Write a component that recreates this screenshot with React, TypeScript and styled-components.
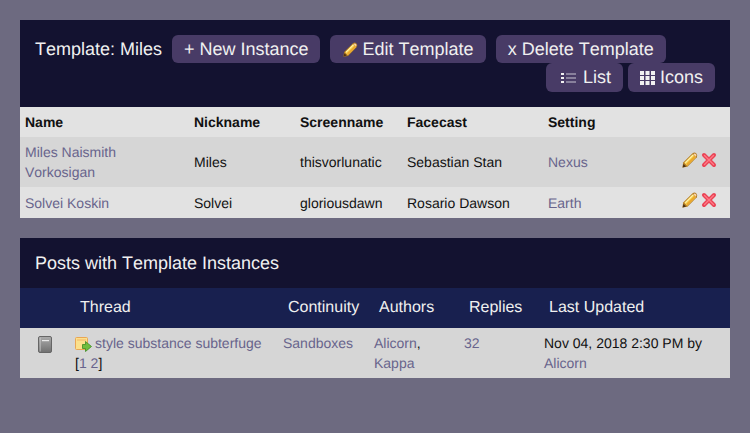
import React from "react";
import styled, { createGlobalStyle } from "styled-components";

const GlobalStyle = createGlobalStyle`
    html, body {
        margin: 0;
        padding: 0;
        background: #6d6a80;
        font-family: "Liberation Sans", Arial, sans-serif;
        font-kerning: none;
        text-rendering: geometricPrecision;
    }
`;

const Page = styled.div`
    display: flex;
    flex-direction: column;
    gap: 20px;
    padding: 20px;
    height: 433px;
    box-sizing: border-box;
    overflow: hidden;
`;

const Panel = styled.section`
    display: flex;
    flex-direction: column;
`;

const TemplateHeader = styled.header`
    display: flex;
    flex-direction: column;
    height: 87px;
    box-sizing: border-box;
    padding: 15px 15px 0;
    background: #131230;
`;

const HeaderRow = styled.div<{ $end?: boolean; $gap: number }>`
    display: flex;
    align-items: center;
    gap: ${(p) => p.$gap}px;
    justify-content: ${(p) => (p.$end ? "flex-end" : "flex-start")};
`;

const TemplateTitle = styled.h1`
    margin: 0 0 1px 0;
    width: 127px;
    font-size: 18px;
    font-weight: normal;
    line-height: 26px;
    white-space: nowrap;
    color: #f0f0f0;
`;

const HeaderButton = styled.a<{ $h: number; $gap?: number; $left?: number; $right?: number }>`
    display: flex;
    align-items: center;
    gap: ${(p) => p.$gap ?? 5}px;
    height: ${(p) => p.$h}px;
    box-sizing: border-box;
    padding: 0 ${(p) => p.$right ?? 12}px 0 ${(p) => p.$left ?? 12}px;
    border-radius: 6px;
    background: #483b66;
    color: #f0f0f0;
    font-size: 18px;
    white-space: nowrap;
`;

const PanelTitle = styled.h2`
    display: flex;
    align-items: center;
    height: 50px;
    margin: 0;
    padding: 0 15px;
    background: #131230;
    color: #f0f0f0;
    font-size: 18px;
    font-weight: normal;
`;

const Table = styled.table`
    width: 710px;
    table-layout: fixed;
    border-collapse: collapse;
    font-size: 14px;
    line-height: 20px;
    color: #111;
`;

const TemplateHead = styled.th`
    height: 30px;
    padding: 0 5px;
    background: #e2e2e2;
    font-weight: bold;
    text-align: left;
`;

const Row = styled.tr<{ $alt?: boolean }>`
    background: ${(p) => (p.$alt ? "#e2e2e2" : "#d6d6d6")};
`;

const Cell = styled.td`
    padding: 5px;
    vertical-align: middle;
`;

const ActionCell = styled(Cell)`
    padding: 5px 13px 5px 0;
`;

const ActionIcons = styled.div`
    display: flex;
    justify-content: flex-end;
    align-items: flex-start;
    gap: 3px;
    height: 21px;
`;

const PostHead = styled.th`
    height: 40px;
    padding: 0 10px;
    background: #18204f;
    color: #f0f0f0;
    font-size: 16px;
    font-weight: normal;
    text-align: left;
    white-space: nowrap;
`;

const IconCell = styled(Cell)`
    padding: 8px 0 0;
    vertical-align: top;
`;

const TopCell = styled(Cell)`
    vertical-align: top;
`;

const Link = styled.a`
    color: #68648c;
    text-decoration: none;
`;

const ThreadSvg = styled.svg`
    display: inline-block;
    vertical-align: -4px;
    margin-right: 3px;
`;

const BookSvg = styled.svg`
    display: block;
    margin: 0 auto;
`;

const Pencil = ({ size = 16 }: { size?: number }) => (
    <svg width={size} height={size} viewBox="0 0 16 16" style={{ display: "block" }}>
        <path d="M.4 15.6 L1.2 10.6 L10.6 1.2 Q12.4 0 14.2 1.2 Q16 3 14.8 5.2 L5.4 14.8 Z" fill="#b27a22" />
        <path d="M2.2 10.8 L10.8 2.2 L13.8 5.2 L5.2 13.8 Z" fill="#fbdc62" />
        <path d="M4.2 11.8 L12.4 3.6 L13.8 5.2 L5.2 13.8 Z" fill="#eca92c" />
        <path d="M3 10.4 L10.6 2.8 L11.2 3.4 L3.6 11 Z" fill="#fff3b8" />
        <path d="M11.2 2.2 Q12.6 1 13.9 2 Q15 3.4 13.8 4.8 Z" fill="#f7d3ac" />
        <path d="M.6 15.4 L1.5 12 L4 14.5 Z" fill="#4a3216" />
    </svg>
);

const Cross = () => (
    <svg width={16} height={16} viewBox="0 0 16 16" style={{ display: "block" }}>
        <path d="M3 3 L13 13 M13 3 L3 13" stroke="#ea4355" strokeWidth={4} strokeLinecap="round" />
        <path d="M3.5 3.5 L12.5 12.5 M12.5 3.5 L3.5 12.5" stroke="#ff7a86" strokeWidth={1.4} strokeLinecap="round" />
    </svg>
);

const ListGlyph = () => (
    <svg width={15} height={10} viewBox="0 0 15 10" style={{ display: "block" }}>
        <path d="M0 0h3v2H0zM0 4h3v2H0zM0 8h3v2H0z" fill="#f0f0f0" />
        <path d="M5 .5h10v1H5zM5 4.5h10v1H5zM5 8.5h10v1H5z" fill="#c8c6d2" />
    </svg>
);

const GridGlyph = () => (
    <svg width={15} height={14} viewBox="0 0 15 14" style={{ display: "block" }}>
        <path
            d="M0 0h4v4H0zM5.5 0h4v4h-4zM11 0h4v4h-4zM0 5h4v4H0zM5.5 5h4v4h-4zM11 5h4v4h-4zM0 10h4v4H0zM5.5 10h4v4h-4zM11 10h4v4h-4z"
            fill="#f0f0f0"
        />
    </svg>
);

const BookIcon = () => (
    <BookSvg width={14} height={17} viewBox="0 0 14 17">
        <defs>
            <linearGradient id="bookFill" x1="0" y1="0" x2="0" y2="1">
                <stop offset="0" stopColor="#ababab" />
                <stop offset="1" stopColor="#707070" />
            </linearGradient>
        </defs>
        <rect x=".5" y=".5" width="13" height="16" rx="1.5" fill="url(#bookFill)" stroke="#666" />
        <rect x="1.5" y="1.5" width="1.5" height="14" fill="#cfcfcf" opacity=".5" />
        <rect x="4" y="4" width="7" height="1.2" fill="#e8e8e8" />
    </BookSvg>
);

const ThreadIcon = () => (
    <ThreadSvg width={17} height={16} viewBox="0 0 17 16">
        <rect x=".5" y="1.5" width="12" height="12" rx="1" fill="#fbe08c" stroke="#e9a654" />
        <path d="M2 4h9" stroke="#f4b566" />
        <path d="M7.5 8.5h3V5.5L16.5 10.5l-6 5v-3h-3z" fill="#70bd3e" stroke="#3d8a22" strokeWidth=".8" />
    </ThreadSvg>
);

const templates = [
    { name: "Miles Naismith Vorkosigan", nick: "Miles", screen: "thisvorlunatic", face: "Sebastian Stan", setting: "Nexus" },
    { name: "Solvei Koskin", nick: "Solvei", screen: "gloriousdawn", face: "Rosario Dawson", setting: "Earth" },
];

const templateCols = [169, 106, 107, 141, 127, 60];
const postCols = [50, 208, 91, 90, 80, 191];

export default function App() {
    return (
        <>
            <GlobalStyle />
            <Page>
                <Panel>
                    <TemplateHeader>
                        <HeaderRow $gap={10}>
                            <TemplateTitle>Template: Miles</TemplateTitle>
                            <HeaderButton $h={28} $right={11}>+ New Instance</HeaderButton>
                            <HeaderButton $h={28} $left={13}>
                                <Pencil size={15} />
                                Edit Template
                            </HeaderButton>
                            <HeaderButton $h={28}>x Delete Template</HeaderButton>
                        </HeaderRow>
                        <HeaderRow $end $gap={5}>
                            <HeaderButton $h={29} $left={15} $gap={7}>
                                <ListGlyph />
                                List
                            </HeaderButton>
                            <HeaderButton $h={29}>
                                <GridGlyph />
                                Icons
                            </HeaderButton>
                        </HeaderRow>
                    </TemplateHeader>
                    <Table>
                        <colgroup>
                            {templateCols.map((w, i) => (
                                <col key={i} width={w} />
                            ))}
                        </colgroup>
                        <thead>
                            <tr>
                                <TemplateHead>Name</TemplateHead>
                                <TemplateHead>Nickname</TemplateHead>
                                <TemplateHead>Screenname</TemplateHead>
                                <TemplateHead>Facecast</TemplateHead>
                                <TemplateHead>Setting</TemplateHead>
                                <TemplateHead />
                            </tr>
                        </thead>
                        <tbody>
                            {templates.map((t, i) => (
                                <Row key={t.name} $alt={i % 2 === 1}>
                                    <Cell>
                                        <Link>{t.name}</Link>
                                    </Cell>
                                    <Cell>{t.nick}</Cell>
                                    <Cell>{t.screen}</Cell>
                                    <Cell>{t.face}</Cell>
                                    <Cell>
                                        <Link>{t.setting}</Link>
                                    </Cell>
                                    <ActionCell>
                                        <ActionIcons>
                                            <Pencil />
                                            <Cross />
                                        </ActionIcons>
                                    </ActionCell>
                                </Row>
                            ))}
                        </tbody>
                    </Table>
                </Panel>
                <Panel>
                    <PanelTitle>Posts with Template Instances</PanelTitle>
                    <Table>
                        <colgroup>
                            {postCols.map((w, i) => (
                                <col key={i} width={w} />
                            ))}
                        </colgroup>
                        <thead>
                            <tr>
                                <PostHead />
                                <PostHead>Thread</PostHead>
                                <PostHead>Continuity</PostHead>
                                <PostHead>Authors</PostHead>
                                <PostHead>Replies</PostHead>
                                <PostHead>Last Updated</PostHead>
                            </tr>
                        </thead>
                        <tbody>
                            <Row>
                                <IconCell>
                                    <BookIcon />
                                </IconCell>
                                <TopCell>
                                    <ThreadIcon />
                                    <Link>style substance subterfuge</Link>
                                    <br />[<Link>1</Link> <Link>2</Link>]
                                </TopCell>
                                <TopCell>
                                    <Link>Sandboxes</Link>
                                </TopCell>
                                <TopCell>
                                    <Link>Alicorn</Link>, <Link>Kappa</Link>
                                </TopCell>
                                <TopCell>
                                    <Link>32</Link>
                                </TopCell>
                                <TopCell>
                                    Nov 04, 2018 2:30 PM by <Link>Alicorn</Link>
                                </TopCell>
                            </Row>
                        </tbody>
                    </Table>
                </Panel>
            </Page>
        </>
    );
}
